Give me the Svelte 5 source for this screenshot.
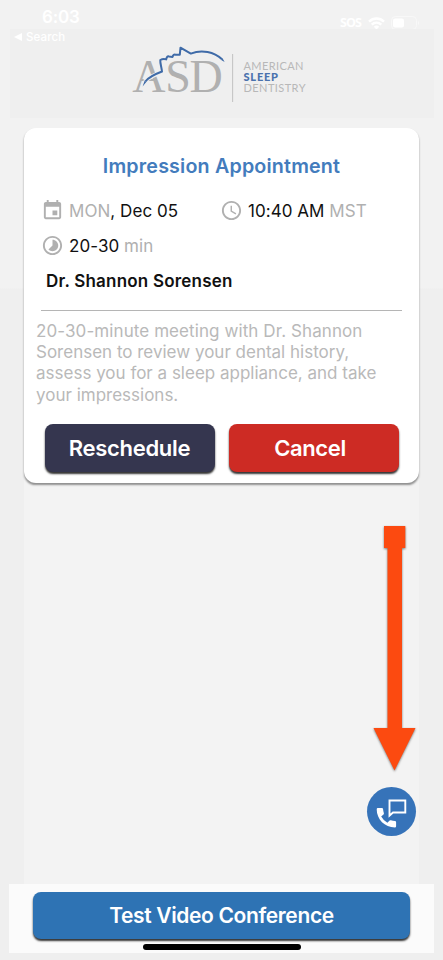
<script>
  const appointment = {
    title: 'Impression Appointment',
    weekday: 'MON',
    date: ', Dec 05',
    time: '10:40 AM',
    zone: 'MST',
    length: '20-30',
    doctor: 'Dr. Shannon Sorensen',
    notes: [
      '20-30-minute meeting with Dr. Shannon',
      'Sorensen to review your dental history,',
      'assess you for a sleep appliance, and take',
      'your impressions.',
    ],
  };
</script>

<div class="screen">
  <div class="status">
    <span class="clock">6:03</span>
    <div class="signals">
      <span class="sos">SOS</span>
      <svg width="17" height="13" viewBox="0 0 17 13" fill="none" stroke="#fff" stroke-width="2.5">
        <path d="M1 4.6c4.3-4.1 10.700-4.100 15 0M3.700 7.600c2.800-2.600 6.800-2.600 9.600 0" />
        <path d="M5.800 9.700c1.600-1.500 3.800-1.500 5.400 0L8.500 12.500z" fill="#fff" stroke="none" />
      </svg>
      <svg width="29" height="14" viewBox="0 0 29 14">
        <rect x="0.500" y="0.500" width="25" height="13" rx="4" fill="none" stroke="#f8f8f8" />
        <rect x="2" y="2.500" width="11" height="9" rx="2" fill="#fff" />
        <path d="M27 5c1.500.5 1.500 3.500 0 4z" fill="#f8f8f8" />
      </svg>
    </div>
  </div>

  <header>
    <div class="back"><i></i>Search</div>
    <svg class="logo" width="200" height="75" viewBox="0 0 200 75">
      <g class="serif">
        <text x="12.300" y="57">A</text>
        <text x="45.300" y="57">S</text>
        <text x="69.500" y="57">D</text>
      </g>
      <path class="gap" d="M24.500 46.500C29 42 35 39.500 42 37L41 26" />
      <path class="face" d="M25.500 46.300C29 42 34 39.500 42 36.500C41.500 32 40 28 40.300 25Q43 23.500 46.200 24.400Q47 20.500 49 21.500L52.500 21.900Q53.500 18.900 55.500 19.700L59.800 19.700L60.500 12.700L70.800 18.600C82 14.200 94 17 102 24.300" />
      <path class="tip" d="M22.600 51.500L26.300 47 24.700 45.500ZM104.600 27L101.200 24.900 102.600 23.200Z" />
      <rect x="112.200" y="19" width="0.900" height="48" fill="#bdbdbd" />
      <g class="sans">
        <text x="123.500" y="35" textLength="60">AMERICAN</text>
        <text class="bold" x="123.500" y="46.200" textLength="34.500">SLEEP</text>
        <text x="123.500" y="57.400" textLength="62">DENTISTRY</text>
      </g>
    </svg>
  </header>

  <main>
    <section class="card">
      <h1>{appointment.title}</h1>
      <div class="facts">
        <div class="fact">
          <svg viewBox="0 0 24 24"><path d="M17 12h-5v5h5v-5zM16 1v2H8V1H6v2H5c-1.110 0-1.990.9-1.990 2L3 19c0 1.100.89 2 2 2h14c1.100 0 2-.9 2-2V5c0-1.100-.9-2-2-2h-1V1h-2zm3 18H5V8h14v11z" /></svg>
          <span class="date"><em>{appointment.weekday}</em>{appointment.date}</span>
        </div>
        <div class="fact">
          <svg viewBox="0 0 24 24"><path d="M11.990 2C6.470 2 2 6.480 2 12s4.470 10 9.990 10C17.520 22 22 17.520 22 12S17.520 2 11.990 2zM12 20c-4.420 0-8-3.580-8-8s3.580-8 8-8 8 3.580 8 8-3.580 8-8 8zm.5-13H11v6l5.250 3.150.75-1.230-4.500-2.670z" /></svg>
          <span class="time">{appointment.time} <em>{appointment.zone}</em></span>
        </div>
        <div class="fact">
          <svg viewBox="0 0 24 24"><path d="M16.240 7.760C15.070 6.590 13.540 6 12 6v6l-4.240 4.240c2.340 2.340 6.140 2.340 8.490 0 2.340-2.340 2.340-6.140-.01-8.480zM12 2C6.480 2 2 6.480 2 12s4.480 10 10 10 10-4.480 10-10S17.520 2 12 2zm0 18c-4.420 0-8-3.580-8-8s3.580-8 8-8 8 3.580 8 8-3.580 8-8 8z" /></svg>
          <span class="length">{appointment.length} <em>min</em></span>
        </div>
      </div>
      <h2>{appointment.doctor}</h2>
      <hr />
      <p>
        {#each appointment.notes as line}
          <span>{line}</span>
        {/each}
      </p>
      <div class="actions">
        <button class="reschedule">Reschedule</button>
        <button class="cancel">Cancel</button>
      </div>
    </section>
  </main>

  <footer>
    <button class="test">Test Video Conference</button>
    <div class="home"></div>
  </footer>

  <svg class="pointer" width="46" height="252" viewBox="0 0 46 252">
    <path d="M12 2H33.300V24H30V204H43.500L22.500 246.500L1.500 204H15.500V24H12Z" />
  </svg>

  <button class="contact" aria-label="Contact">
    <svg width="49" height="49" viewBox="0 0 49 49">
      <path d="M22.500 13.500H38.300V25.500H26L22.500 28.600Z" fill="none" stroke="#fff" stroke-width="1.900" />
      <path d="M9.700 22.200Q9.700 21 10.900 21H14.900Q16 21 16.100 22.200Q16.200 24.500 16.900 26.200Q17 27 16.500 27.500L14.200 29.600Q16.700 34 20.400 35.800L22.600 33.500Q23.200 33 23.900 33.200Q25.900 33.900 27.900 34Q29.100 34 29.100 35.200V39.200Q29.100 40.400 27.900 40.400C17.800 40.400 9.700 32.300 9.700 22.200Z" fill="#fff" />
    </svg>
  </button>
</div>

<style>
  :global(body) { background: #efefef; }

  .screen {
    position: relative;
    display: flex;
    flex-direction: column;
    height: 960px;
    background: linear-gradient(#f2f2f2 288px, #efefef 289px);
    font-family: Inter, "Liberation Sans", sans-serif;
    overflow: hidden;
  }
  .screen * { box-sizing: border-box; }
  svg { display: block; flex: none; }
  button {
    border: 0;
    padding: 0;
    font-family: inherit;
    color: #fff;
    white-space: nowrap;
  }

  .status {
    display: flex;
    justify-content: space-between;
    height: 29px;
    padding: 0 23px 0 42px;
    color: #fff;
  }
  .clock { font-size: 17px; font-weight: 600; line-height: 34px; letter-spacing: -0.200px; }
  .signals { display: flex; align-items: center; gap: 6px; padding-top: 17px; }
  .sos {
    margin-right: 1px;
    font-family: "Open Sans", sans-serif;
    font-size: 12.500px;
    font-weight: 700;
    line-height: 14px;
    letter-spacing: -0.900px;
  }

  header {
    position: relative;
    height: 89px;
    margin: 0 9px 0 10px;
    padding: 6px 0 0 110px;
    background: #efefef;
  }
  .back {
    position: absolute;
    left: 4px;
    top: 0;
    display: flex;
    align-items: center;
    gap: 4px;
    font-size: 11.500px;
    font-weight: 500;
    line-height: 16px;
    letter-spacing: 0.100px;
    color: #fff;
  }
  .back i {
    border: 4px solid transparent;
    border-right: 8px solid #fff;
    border-left: 0;
  }
  .serif { font-family: "Liberation Serif", serif; font-size: 46px; fill: #b0b0b0; }
  .sans { font-family: Lato, sans-serif; font-size: 11px; fill: #b8b8b8; }
  .bold { font-weight: 900; fill: #4a72ad; }
  .gap { fill: none; stroke: #efefef; stroke-width: 4; }
  .face { fill: none; stroke: #3f6ba8; stroke-width: 2; stroke-linejoin: round; }
  .tip { fill: #3f6ba8; }

  main {
    flex: 1;
    margin: 10px 24px 0;
    background: linear-gradient(#f2f2f2 170px, #f3f3f3 171px);
  }
  .card {
    height: 355px;
    padding: 26px 12px 0;
    background: #fff;
    border-radius: 12px;
    box-shadow: 0 2px 2px -0.500px #8f8f8f;
  }
  h1 {
    margin: 0;
    font-size: 19.700px;
    font-weight: 600;
    line-height: 25px;
    letter-spacing: 0.170px;
    text-align: center;
    color: #437cbd;
  }
  .facts {
    display: grid;
    grid-template-columns: 179px auto;
    grid-auto-rows: 35px;
    margin: 14px 0 0 5px;
  }
  .fact { display: flex; align-items: center; gap: 5px; font-size: 17px; color: #111; white-space: nowrap; }
  .fact svg { width: 23px; height: 23px; fill: #b0b0b0; }
  .date { letter-spacing: 0.050px; }
  .time { letter-spacing: 0.050px; }
  .length { letter-spacing: 0.060px; }
  em { font-style: normal; color: #b0b0b0; }
  h2 {
    margin: 6px 0 0 10px;
    font-size: 17px;
    font-weight: 600;
    line-height: 24px;
    letter-spacing: 0.210px;
    color: #111;
  }
  hr {
    height: 1px;
    margin: 17px 5px 10px;
    border: 0;
    background: #b5b5b5;
  }
  p {
    margin: 0;
    font-size: 17px;
    line-height: 21.200px;
    color: #b9b9b9;
    white-space: nowrap;
  }
  p span { display: block; }
  p span:first-child { letter-spacing: 0.090px; }
  .actions {
    display: grid;
    grid-template-columns: 170px 170px;
    gap: 14px;
    margin: 18px 0 0 8.500px;
  }
  .actions button {
    height: 48px;
    border-radius: 8px;
    font-size: 22px;
    font-weight: 600;
    letter-spacing: -0.300px;
    box-shadow: 0 2px 2px #333;
  }
  .actions .reschedule { background: #35364f; }
  .actions .cancel {
    padding-right: 7px;
    background: #cd2b24;
    letter-spacing: -0.400px;
  }

  footer {
    display: flex;
    flex-direction: column;
    align-items: center;
    height: 69px;
    margin: 0 9px 7px;
    padding-top: 8px;
    background: #fbfbfb;
  }
  .test {
    width: 377px;
    height: 47px;
    border-radius: 8px;
    background: #2e73b4;
    font-size: 21px;
    font-weight: 600;
    letter-spacing: -0.360px;
    box-shadow: 0 2px 2px #333;
  }
  .home {
    width: 158px;
    height: 6px;
    margin-top: 5px;
    border-radius: 3px;
    background: #000;
  }

  .pointer {
    position: absolute;
    left: 372px;
    top: 524px;
    fill: #fc4a10;
    filter: drop-shadow(0 1px 1px rgba(0, 0, 0, 0.5));
  }
  .contact {
    position: absolute;
    left: 367px;
    top: 787px;
    width: 49px;
    height: 49px;
    border-radius: 50%;
    background: #3673b9;
  }
</style>
